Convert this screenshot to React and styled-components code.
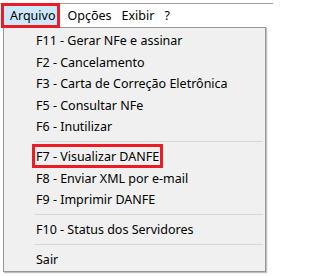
import React from 'react';
import styled, { createGlobalStyle } from 'styled-components';

const GlobalStyle = createGlobalStyle`
    html, body {
        margin: 0;
        padding: 0;
        background: #ffffff;
    }
    body {
        font-family: 'Noto Sans', 'Open Sans', sans-serif;
        font-size: 12.5px;
        color: #000000;
    }
`;

const menuBar = ['Arquivo', 'Opções', 'Exibir', '?'];

const items = [
    { label: 'F11 - Gerar NFe e assinar' },
    { label: 'F2 - Cancelamento' },
    { label: 'F3 - Carta de Correção Eletrônica' },
    { label: 'F5 - Consultar NFe' },
    { label: 'F6 - Inutilizar' },
    { separator: true },
    { label: 'F7 - Visualizar DANFE', marked: true },
    { label: 'F8 - Enviar XML por e-mail' },
    { label: 'F9 - Imprimir DANFE' },
    { separator: true },
    { label: 'F10 - Status dos Servidores' },
    { separator: true },
    { label: 'Sair' }
];

function App() {
    return (
        <Screen>
            <GlobalStyle />
            <Bar>
                {menuBar.map((name, i) => (
                    <BarItem key={name} active={i === 0}>
                        {name}
                    </BarItem>
                ))}
            </Bar>
            <Dropdown>
                {items.map((item, i) =>
                    item.separator ? (
                        <Separator key={i} />
                    ) : (
                        <Item key={i}>
                            <Label marked={item.marked}>{item.label}</Label>
                        </Item>
                    )
                )}
            </Dropdown>
        </Screen>
    );
}

export default App;

const Screen = styled.div`
    width: 273px;
    height: 276px;
    overflow: hidden;
    background: #ffffff;
    padding-top: 3px;
    box-sizing: border-box;
`;

const Bar = styled.div`
    display: flex;
    align-items: stretch;
    height: 23px;
    border-top: 1px solid #a0a0a0;
    padding-left: 4px;
`;

const BarItem = styled.div`
    position: relative;
    display: flex;
    align-items: center;
    padding: 0 ${p => (p.active ? '2px' : '5px')} 1px ${p => (p.active ? '6px' : '5px')};
    margin-right: ${p => (p.active ? '5px' : '0')};
    background: ${p => (p.active ? '#cce8ff' : 'transparent')};
    &::after {
        content: '';
        display: ${p => (p.active ? 'block' : 'none')};
        position: absolute;
        left: -3px;
        top: -1px;
        right: -3px;
        bottom: -1px;
        border: 3px solid #ec1c24;
    }
`;

const Dropdown = styled.div`
    width: 263px;
    margin-left: 3px;
    height: 245px;
    box-sizing: border-box;
    background: #f0f0f0;
    border: 1px solid #979797;
    padding: 2px 0;
    box-shadow: 1px 1px 1px rgba(0, 0, 0, 0.25);
`;

const Item = styled.div`
    height: 21.5px;
    display: flex;
    align-items: center;
    padding-left: 32px;
`;

const Label = styled.span`
    position: relative;
    white-space: nowrap;
    &::after {
        content: '';
        display: ${p => (p.marked ? 'block' : 'none')};
        position: absolute;
        left: -4px;
        right: -4px;
        top: -4px;
        bottom: -3px;
        border: 3px solid #ec1c24;
    }
`;

const Separator = styled.div`
    height: 8.5px;
    display: flex;
    align-items: center;
    padding-left: 31px;
    padding-right: 2px;
    &::before {
        content: '';
        flex: 1;
        height: 1px;
        background: #d7d7d7;
    }
`;
